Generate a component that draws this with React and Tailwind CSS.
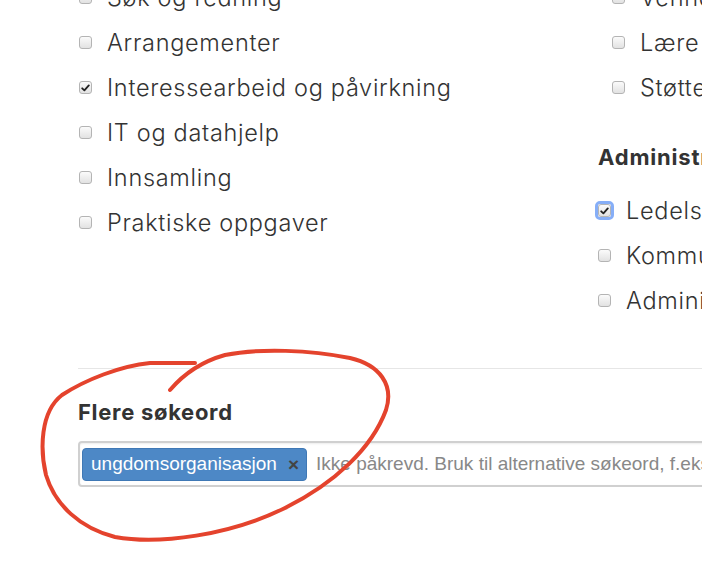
import React from 'react';

const LEFT = [
  { label: 'Søk og redning' },
  { label: 'Arrangementer' },
  { label: 'Interessearbeid og påvirkning', checked: true },
  { label: 'IT og datahjelp' },
  { label: 'Innsamling' },
  { label: 'Praktiske oppgaver' },
];

const RIGHT_TOP = [{ label: 'Venneoppgaver' }, { label: 'Lære bort' }, { label: 'Støtte' }];
const RIGHT_ADMIN = [
  { label: 'Ledelse', checked: true, focused: true },
  { label: 'Kommunikasjon' },
  { label: 'Administrasjon' },
];

function Box({ checked, focused }) {
  const box = (
    <span className="flex h-[13px] w-[13px] shrink-0 items-center justify-center rounded-[3px] border border-[#b4b4b4] bg-gradient-to-b from-[#fbfbfb] to-[#e2e2e2]">
      {checked && (
        <svg width="9" height="8" viewBox="0 0 9 8">
          <path d="M1.2 4.3 L3.4 6.4 L7.8 1.4" fill="none" stroke="#222" strokeWidth="1.8" strokeLinecap="round" strokeLinejoin="round" />
        </svg>
      )}
    </span>
  );
  if (!focused) return box;
  return <span className="-m-[3px] flex rounded-[5px] border-[3px] border-[#86aef7]">{box}</span>;
}

function Item({ label, checked, focused }) {
  return (
    <div className="flex h-[45px] items-center gap-[15px] whitespace-nowrap">
      <Box checked={checked} focused={focused} />
      <span className="text-[23.5px] font-light tracking-[0.7px] text-[#333]">{label}</span>
    </div>
  );
}

export default function App() {
  return (
    <div className="relative h-[578px] w-[702px] overflow-hidden bg-white font-['Inter',sans-serif] text-[#333]">
      <div className="-mt-[25px] flex pl-[79px]">
        <div className="w-[519px] shrink-0">
          {LEFT.map((it) => (
            <Item key={it.label} {...it} />
          ))}
        </div>
        <div className="shrink-0">
          <div className="pl-[14px]">
            {RIGHT_TOP.map((it) => (
              <Item key={it.label} {...it} />
            ))}
          </div>
          <h3 className="mt-[33px] mb-[17px] whitespace-nowrap text-[22px] font-bold leading-[28px] tracking-[0.8px]">Administrasjon</h3>
          {RIGHT_ADMIN.map((it) => (
            <Item key={it.label} {...it} />
          ))}
        </div>
      </div>

      <div className="ml-[78px] mt-[45px] border-t border-[#e6e6e6] pt-[29px]">
        <h3 className="text-[22px] font-bold leading-[28px] tracking-[0.7px]">Flere søkeord</h3>
        <div className="mt-[15px] flex h-[46px] w-[700px] items-center gap-[9px] rounded-[4px] border-2 border-[#d0d0d0] pl-[2px] font-['Liberation_Sans',sans-serif] shadow-[inset_0_1px_2px_rgba(0,0,0,0.08)]">
          <span className="flex h-[33px] items-center gap-[11px] rounded-[4px] border border-[#3f78b5] bg-[#4d88c6] pl-[8px] pr-[7px] text-[19px] text-white">
            ungdomsorganisasjon
            <span className="text-[19px] font-bold leading-none text-[#444]">×</span>
          </span>
          <span className="whitespace-nowrap text-[19px] text-[#888]">Ikke påkrevd. Bruk til alternative søkeord, f.eks. forkortelser</span>
        </div>
      </div>

      <svg className="pointer-events-none absolute left-0 top-0" width="702" height="578" viewBox="0 0 702 578">
        <path
          d="M195 363 L150 363 C120 366 85 380 62 395 C40 412 40 450 46 475 C55 505 80 528 115 537 C160 545 230 535 285 508 C335 483 372 448 386 410 C394 385 380 365 350 358 C310 350 260 348 225 355 C200 362 182 376 170 390"
          fill="none"
          stroke="#e4432d"
          strokeWidth="4"
          strokeLinecap="round"
          strokeLinejoin="round"
        />
      </svg>
    </div>
  );
}
